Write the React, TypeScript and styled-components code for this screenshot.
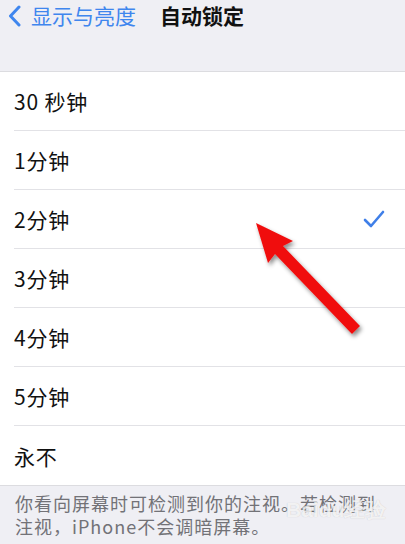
import React from 'react';
import styled, { createGlobalStyle } from 'styled-components';

const GlobalStyle = createGlobalStyle`
  html, body {
    margin: 0;
    padding: 0;
    background: #efeff4;
  }
  body {
    font-family: "Noto Sans CJK SC", "Noto Sans", sans-serif;
  }
`;

const Screen = styled.div`
  position: relative;
  width: 405px;
  height: 544px;
  overflow: hidden;
  background: #efeff4;
`;

const NavBar = styled.div`
  display: flex;
  align-items: center;
  height: 31px;
  padding-left: 8px;
`;

const BackButton = styled.div`
  display: flex;
  align-items: center;
  gap: 10px;
  color: #3f86ee;
  font-size: 21px;
  line-height: 1;
`;

const Title = styled.div`
  margin-left: 24px;
  font-size: 21px;
  font-weight: 700;
  color: #111;
  line-height: 1;
`;

const HeaderSpace = styled.div`
  height: 40px;
  border-bottom: 1px solid #dcdce0;
`;

const List = styled.div`
  background: #fff;
  border-bottom: 1px solid #dcdce0;
`;

const Row = styled.div<{ $last?: boolean }>`
  display: flex;
  align-items: center;
  justify-content: space-between;
  height: 59px;
  margin-left: 14px;
  padding-right: 20px;
  box-sizing: border-box;
  border-bottom: ${(p) => (p.$last ? 'none' : '1px solid #e2e2e6')};
`;

const RowLabel = styled.span`
  font-size: 21px;
  color: #111;
  letter-spacing: 0.8px;
`;

const Footer = styled.div`
  padding: 6px 26px 0 15px;
  font-size: 18px;
  line-height: 23px;
  color: #727277;
  letter-spacing: 1px;
`;

const Watermark = styled.div`
  position: absolute;
  left: 286px;
  top: 496px;
  color: rgba(255, 255, 255, 0.8);
  font-family: "Liberation Sans", sans-serif;
  font-size: 21px;
  font-weight: 700;
  text-shadow: 0 0 1px rgba(0, 0, 0, 0.2);
  pointer-events: none;
`;

const ArrowLayer = styled.svg`
  position: absolute;
  left: 0;
  top: 0;
  pointer-events: none;
`;

const options = ['30 秒钟', '1分钟', '2分钟', '3分钟', '4分钟', '5分钟', '永不'];

const App = () => {
  return (
    <Screen>
      <GlobalStyle />
      <NavBar>
        <BackButton>
          <svg width="13" height="22" viewBox="0 0 13 22">
            <path d="M11 2 L2.5 11 L11 20" fill="none" stroke="#3f86ee" strokeWidth="3" strokeLinecap="round" strokeLinejoin="round" />
          </svg>
          <span>显示与亮度</span>
        </BackButton>
        <Title>自动锁定</Title>
      </NavBar>
      <HeaderSpace />
      <List>
        {options.map((label, i) => (
          <Row key={label} $last={i === options.length - 1}>
            <RowLabel>{label}</RowLabel>
            {label === '2分钟' && (
              <svg width="22" height="18" viewBox="0 0 22 18">
                <path d="M2 10 L8 16 L20 2" fill="none" stroke="#3f7fe8" strokeWidth="2.6" strokeLinecap="round" strokeLinejoin="round" />
              </svg>
            )}
          </Row>
        ))}
      </List>
      <Footer>
        你看向屏幕时可检测到你的注视。若检测到注视，iPhone不会调暗屏幕。
      </Footer>
      <Watermark>Baidu经验</Watermark>
      <ArrowLayer width="405" height="544" viewBox="0 0 405 544">
        <defs>
          <filter id="shadow" x="-20%" y="-20%" width="140%" height="140%">
            <feDropShadow dx="2" dy="3" stdDeviation="2" floodColor="#000" floodOpacity="0.45" />
          </filter>
        </defs>
        <polygon
          points="256,223 293,241 283,246 360,326 352,334 275,254 268,263"
          fill="#f01010"
          filter="url(#shadow)"
        />
      </ArrowLayer>
    </Screen>
  );
};

export default App;
